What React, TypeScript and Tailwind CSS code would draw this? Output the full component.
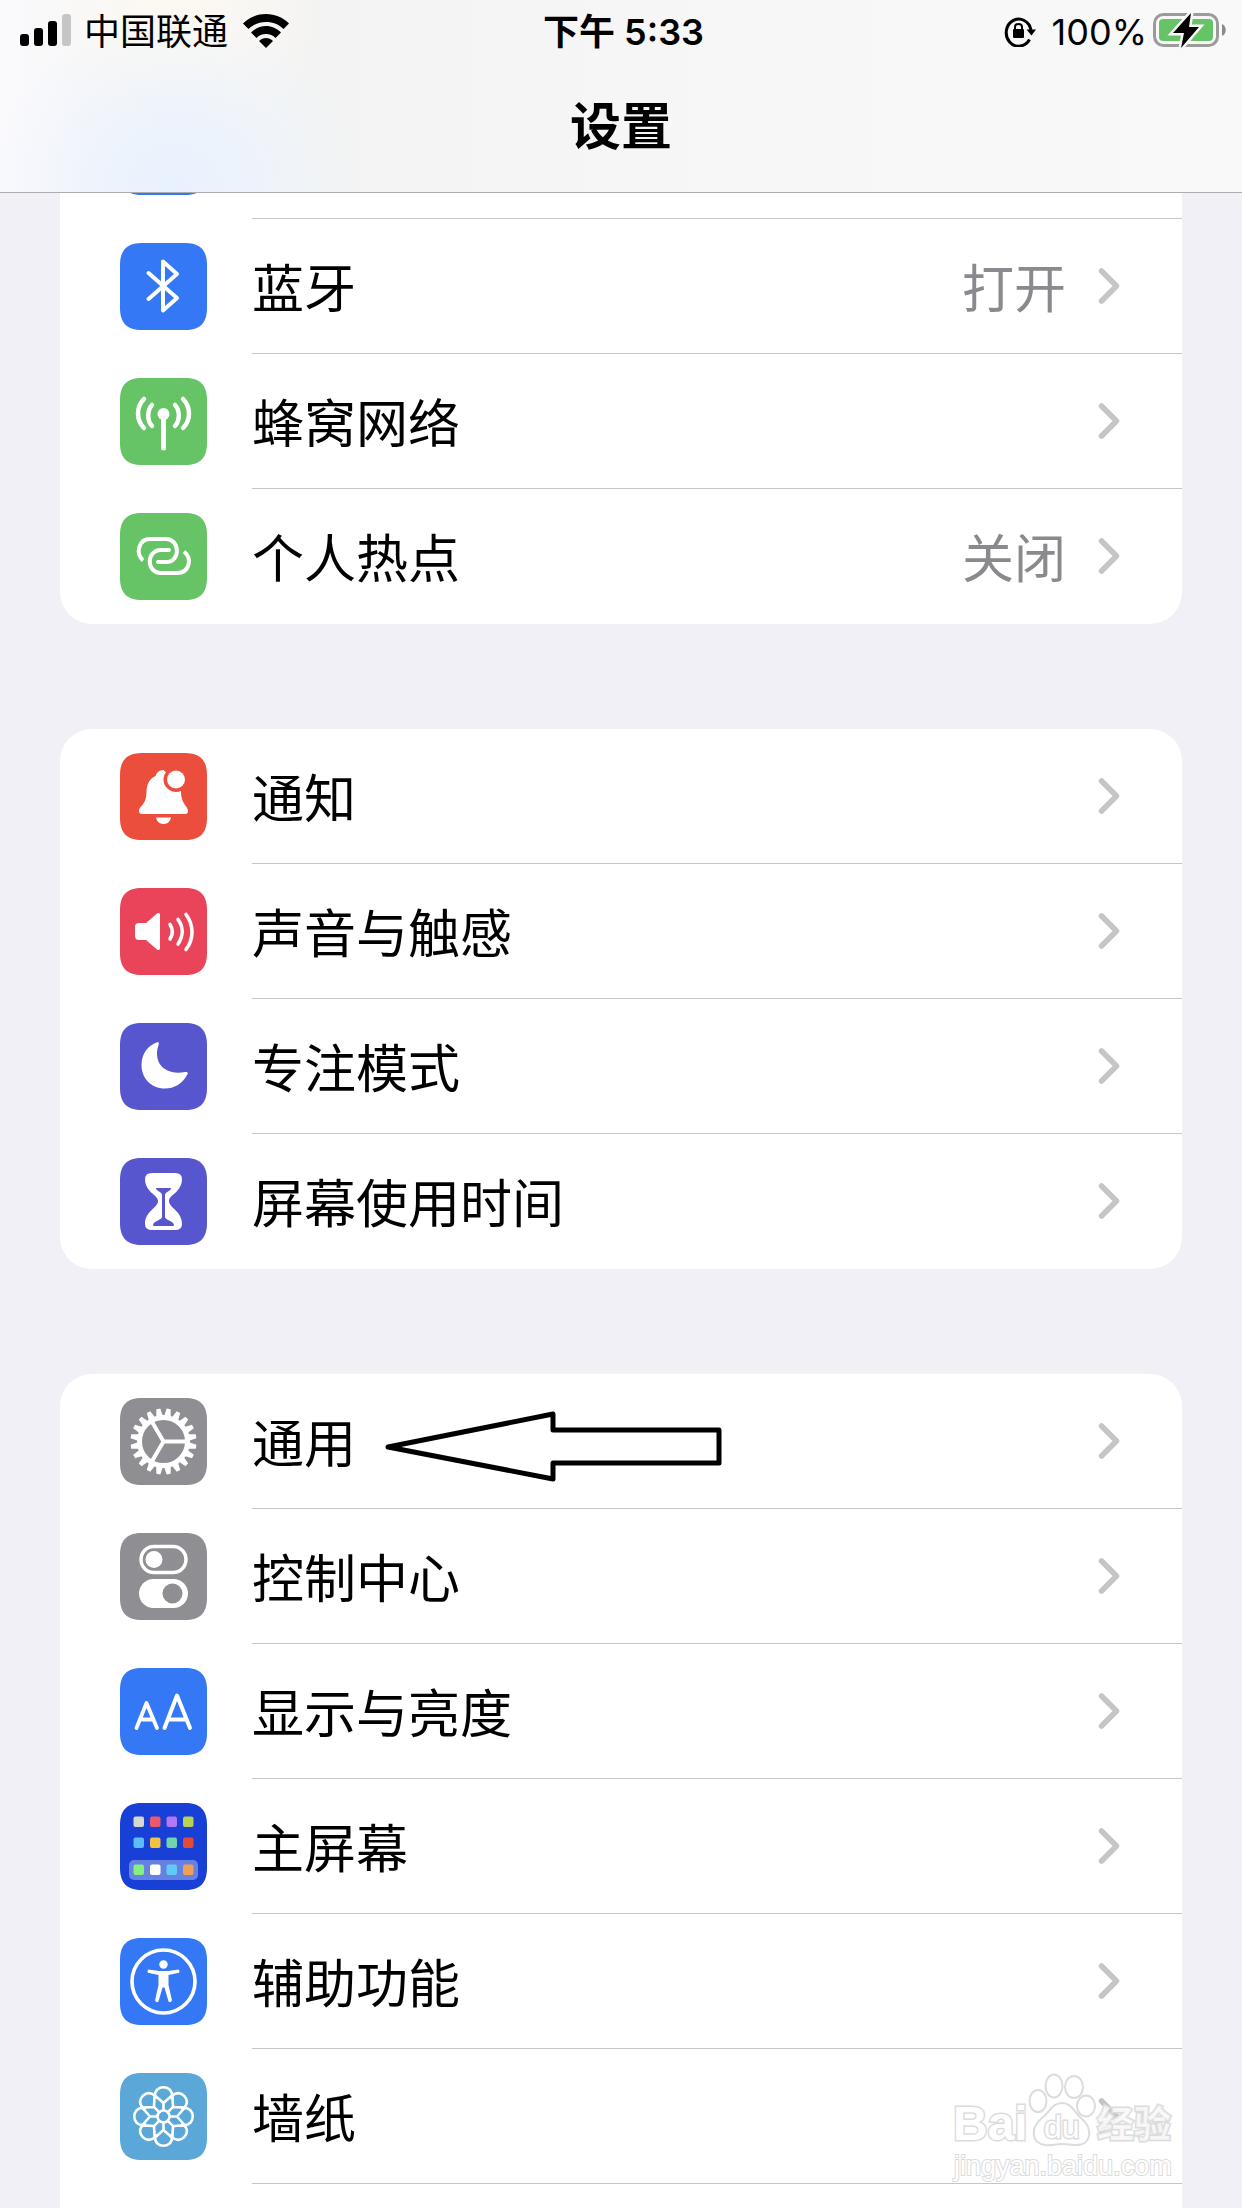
import { ReactNode } from "react";

const CHINESE = "font-['Inter','Noto_Sans_CJK_SC',sans-serif]";

function Tile({ color, children }: { color: string; children?: ReactNode }) {
  return (
    <svg viewBox="0 0 87 87" className={`size-[87px] shrink-0 ${color}`} aria-hidden="true">
      <path
        d="M22 0H65C80 0 87 7 87 22V65C87 80 80 87 65 87H22C7 87 0 80 0 65V22C0 7 7 0 22 0Z"
        fill="currentColor"
      />
      {children}
    </svg>
  );
}

function BluetoothIcon() {
  return (
    <Tile color="text-[#3478f6]">
      <path
        d="M28.500 30L57 55L43 67.500V18.500L57 31L28.500 56"
        fill="none"
        stroke="#fff"
        strokeWidth="4"
        strokeLinecap="round"
        strokeLinejoin="round"
      />
    </Tile>
  );
}

function CellularIcon() {
  return (
    <Tile color="text-[#67c466]">
      <circle cx="43.500" cy="36" r="6" fill="#fff" />
      <g fill="none" stroke="#fff" strokeWidth="4.500" strokeLinecap="round">
        <path d="M43.500 36V70" strokeWidth="5" />
        <path d="M32 27C27 32 27 43 32 48M55 27C60 32 60 43 55 48" />
        <path d="M24 21C16 29 16 42 24 50M63 21C71 29 71 42 63 50" />
      </g>
    </Tile>
  );
}

function HotspotIcon() {
  return (
    <Tile color="text-[#67c466]">
      <g fill="none" stroke="#fff" strokeWidth="4">
        <path d="M23 47.500C15 40 19 26 30 26H46C60 26 61 49 46 49H38" />
        <path d="M64 38.500C73 46 69 60 57 60H41C26 60 26 37 41 37H49" />
        <path d="M49 37H48M38 49H39" strokeLinecap="round" />
      </g>
    </Tile>
  );
}

function BellIcon() {
  return (
    <Tile color="text-[#eb4e3d]">
      <path
        d="M43.500 17C39 17 36.500 20 35.500 23C29 26 26.500 32 26.500 39C26.500 52 19 53 19 58Q19 61 22 61H65Q68 61 68 58C68 53 61 51 61 39V33Z"
        fill="#fff"
      />
      <circle cx="56" cy="26.500" r="12.500" fill="currentColor" />
      <circle cx="56" cy="26.500" r="9" fill="#fff" />
      <path d="M36 64.500H51C50 69 47 71 43.500 71S37 69 36 64.500Z" fill="#fff" />
    </Tile>
  );
}

function SpeakerIcon() {
  return (
    <Tile color="text-[#ea445a]">
      <path
        d="M19 35H26L37 25.500Q40 24 40 27V60Q40 63 37 61.500L26 52H19Q15 52 15 48V39Q15 35 19 35Z"
        fill="#fff"
      />
      <g fill="none" stroke="#fff" strokeWidth="3.600" strokeLinecap="round">
        <path d="M50 36.500C53 41 53 46 50 51" />
        <path d="M58 31.500C63.500 39 63.500 48 58 56" />
        <path d="M66 26.500C74 37 74 51 66 61.500" />
      </g>
    </Tile>
  );
}

function MoonIcon() {
  return (
    <Tile color="text-[#5756ce]">
      <path
        d="M36.500 19.500C39 19 39.500 20 38.500 22C33 38 43 53 65 49C68 48.500 68.500 50 67 52C62 61 54 65.500 45 65.500C31 65.500 21.500 55 21.500 42C21.500 31 28 22.500 36.500 19.500Z"
        fill="#fff"
      />
    </Tile>
  );
}

function HourglassIcon() {
  return (
    <Tile color="text-[#5756ce]">
      <path
        d="M32 15H55Q62 15 62 21C62 34 49 37 49 43C49 50 62 53 62 66Q62 72 55 72H32Q25 72 25 66C25 53 38 50 38 43C38 37 25 34 25 21Q25 15 32 15Z"
        fill="#fff"
      />
      <path
        d="M36 30H51C51 33 45 34 45 37V59C45 62 54 63 54 67Q54 68 53 68H34Q33 68 33 67C33 63 42 62 42 59V37C42 34 36 33 36 30Z"
        fill="currentColor"
      />
    </Tile>
  );
}

function GearIcon() {
  return (
    <Tile color="text-[#8e8e93]">
      {Array.from({ length: 20 }, (_, i) => (
        <path
          key={i}
          d="M40 19L41.500 10.500H45.500L47 19Z"
          fill="#fff"
          transform={`rotate(${i * 18 + 9} 43.500 43.500)`}
        />
      ))}
      <circle cx="43.500" cy="43.500" r="24" fill="none" stroke="#fff" strokeWidth="5" />
      <path d="M43.500 43.500H66M43.500 43.500L31.500 23M43.500 43.500L31.500 64" stroke="#fff" strokeWidth="4" />
    </Tile>
  );
}

function TogglesIcon() {
  return (
    <Tile color="text-[#8e8e93]">
      <rect x="21" y="13.500" width="45" height="26" rx="13" fill="none" stroke="#fff" strokeWidth="3.500" />
      <circle cx="34" cy="26.500" r="8.500" fill="#fff" />
      <rect x="19" y="46" width="49" height="29" rx="14.500" fill="#fff" />
      <circle cx="52.500" cy="60.500" r="10" fill="currentColor" />
    </Tile>
  );
}

function TextSizeIcon() {
  return (
    <Tile color="text-[#3478f6]">
      <g fill="none" stroke="#fff" strokeWidth="4" strokeLinecap="round" strokeLinejoin="round">
        <path d="M16.500 60L26.500 35L37 60M20 51.500H33.500" strokeWidth="3.800" />
        <path d="M44.500 60L57 27.500L70 60M49 51.500H65" />
      </g>
    </Tile>
  );
}

const apps = [
  ["#d7d7d0", "#eb5a6a", "#b277f5", "#b9d255"],
  ["#5abdf8", "#f5c142", "#70d5a8", "#e44a35"],
  ["#86f07f", "#ffffff", "#60cbfa", "#f0a055"],
];

function HomeScreenIcon() {
  return (
    <Tile color="text-[#183fd6]">
      <rect x="9" y="57" width="69" height="20" rx="5" fill="#6582e2" />
      {apps.map((row, y) =>
        row.map((fill, x) => (
          <rect
            key={`${x}-${y}`}
            x={13.5 + x * 16.5}
            y={[13.5, 34.5, 61.5][y]}
            width="10.500"
            height="10.500"
            rx="2"
            fill={fill}
          />
        ))
      )}
    </Tile>
  );
}

function AccessibilityIcon() {
  return (
    <Tile color="text-[#3478f6]">
      <circle cx="43.500" cy="43.500" r="31.500" fill="none" stroke="#fff" strokeWidth="3.600" />
      <circle cx="43.500" cy="26.500" r="4.200" fill="#fff" />
      <path
        d="M28.500 31.500L39 33H48L58.500 31.500Q60.500 33 59 34.800L48.500 37V47L52 62.500Q50.500 65.500 48.500 63.500L44.500 49.500H42.500L38.500 63.500Q36.500 65.500 35 62.500L38.500 47V37L28 34.800Q26.500 33 28.500 31.500Z"
        fill="#fff"
      />
    </Tile>
  );
}

function WallpaperIcon() {
  return (
    <Tile color="text-[#5aa7d8]">
      {[0, 45, 90, 135, 180, 225, 270, 315].map((angle) => (
        <path
          key={angle}
          d="M43.500 38V30L35 22.500C35 11.500 52 11.500 52 22.500L43.500 30M35 22.500V26M52 22.500V26"
          fill="none"
          stroke="#fff"
          strokeWidth="2.600"
          strokeLinejoin="round"
          transform={`rotate(${angle} 43.500 43.500)`}
        />
      ))}
      <circle cx="43.500" cy="43.500" r="6" fill="none" stroke="#fff" strokeWidth="2.600" />
    </Tile>
  );
}

function Chevron() {
  return (
    <svg viewBox="0 0 22 36" className="h-9 w-[22px] shrink-0" aria-hidden="true">
      <path
        d="M3.500 3L18.500 18L3.500 33"
        fill="none"
        stroke="#c5c5c7"
        strokeWidth="5.500"
        strokeLinecap="round"
        strokeLinejoin="round"
      />
    </svg>
  );
}

function PointerArrow() {
  return (
    <svg viewBox="0 0 340 84" className="ml-7 h-[84px] w-[340px] shrink-0" aria-hidden="true">
      <path
        d="M4 48L169 15V31H335V64H169V80Z"
        fill="none"
        stroke="#000"
        strokeWidth="5"
        strokeLinejoin="round"
      />
    </svg>
  );
}

type RowProps = { icon: ReactNode; label: string; value?: string; extra?: ReactNode; last?: boolean };

function Row({ icon, label, value, extra, last }: RowProps) {
  return (
    <li>
      <a href="#" className="flex h-[135px] items-center gap-[45px] pl-[60px]">
        {icon}
        <div
          className={`flex h-full flex-1 items-center border-b pr-[62px] ${
            last ? "border-transparent" : "border-[#c6c6c8]"
          }`}
        >
          <span className="pt-2 text-[52px] leading-[60px] whitespace-nowrap">{label}</span>
          {extra}
          <span className="mr-8 ml-auto pt-2 text-[52px] leading-[60px] text-[#8a8a8e]">{value}</span>
          <Chevron />
        </div>
      </a>
    </li>
  );
}

function Watermark() {
  return (
    <svg
      viewBox="0 0 228 112"
      className="absolute right-[64px] bottom-[25px] h-[112px] w-[228px]"
      fill="#fff"
      stroke="#dcdcdc"
      strokeWidth="2"
      aria-hidden="true"
    >
      <g fontFamily="Liberation Sans, Arial, sans-serif" fontWeight="700" paintOrder="stroke" strokeWidth="3">
        <text x="3" y="69" fontSize="48">
          Bai
        </text>
        <text x="147" y="67" fontSize="37" fontFamily="Noto Sans CJK SC, sans-serif" fillOpacity="0.7">
          经验
        </text>
      </g>
      <ellipse cx="88" cy="30" rx="8.500" ry="11" />
      <ellipse cx="104" cy="15" rx="8.500" ry="11.500" />
      <ellipse cx="124" cy="16" rx="9" ry="11" />
      <ellipse cx="136" cy="35" rx="9" ry="10.500" />
      <path d="M112 32C122 32 124 41 131 47C144 58 141 74 127 74C120 74 118 73 112 73C104 73 102 75 95 74C81 72 80 57 92 47C100 41 102 32 112 32Z" />
      <text x="94" y="67" fontSize="32" fontFamily="Liberation Sans, Arial, sans-serif" strokeWidth="3" paintOrder="stroke">
        du
      </text>
      <text x="4" y="104" fontSize="27" fontFamily="Liberation Sans, Arial, sans-serif" strokeWidth="2" paintOrder="stroke">
        jingyan.baidu.com
      </text>
    </svg>
  );
}

function StatusBar() {
  return (
    <div className="grid h-[62px] grid-cols-[1fr_auto_1fr] items-center pr-[15px] pl-5 text-[36px] leading-[44px]">
      <div className="flex items-center">
        <svg viewBox="0 0 52 34" className="h-[34px] w-[52px]" aria-hidden="true">
          <rect x="0" y="20" width="9" height="12" rx="3" />
          <rect x="14" y="14" width="9" height="18" rx="3" />
          <rect x="28" y="7" width="9" height="25" rx="3" />
          <rect x="42" y="0" width="9" height="32" rx="3" fill="#c6c6c6" />
        </svg>
        <span className="ml-3 pt-0.5">中国联通</span>
        <svg viewBox="0 0 46 34" className="ml-[15px] h-[34px] w-[46px]" aria-hidden="true">
          <path d="M23 0C32 0 40 3.500 46 9.500L40.500 15C36 10.500 30 8 23 8S10 10.500 5.500 15L0 9.500C6 3.500 14 0 23 0Z" />
          <path d="M23 12C28.500 12 34 14.500 38 18.500L32.500 24C30 21.500 27 20 23 20S16 21.500 13.500 24L8 18.500C12 14.500 17.500 12 23 12Z" />
          <path d="M23 24C25.500 24 28 25 30 27L23 34L16 27C18 25 20.500 24 23 24Z" />
        </svg>
      </div>
      <time className="pt-0.5 font-semibold">下午 5:33</time>
      <div className="flex items-center justify-end">
        <svg viewBox="0 0 32 32" className="h-8 w-8" aria-hidden="true">
          <path d="M25.500 24.500A12.500 13.500 0 1 1 27 15" fill="none" stroke="#000" strokeWidth="3" />
          <path d="M22.500 14.500H32L27.500 20.500Z" />
          <rect x="9" y="14" width="11" height="9" rx="1" />
          <path d="M11 14V12C11 8 18 8 18 12V14" fill="none" stroke="#000" strokeWidth="2" />
        </svg>
        <span className="ml-4 pt-0.5">100%</span>
        <svg viewBox="0 0 74 42" className="ml-1.5 h-[42px] w-[74px]" aria-hidden="true">
          <rect x="1.500" y="4.500" width="63" height="31" rx="9" fill="none" stroke="#9b9b9b" strokeWidth="3" />
          <rect x="6" y="9" width="54" height="22" rx="4" fill="#67c466" />
          <path d="M69 14C74 16 74 24 69 26Z" fill="#8a8a8a" />
          <path d="M38 3L20 23H31L28 38L46 17H36Z" stroke="#f8f8f8" strokeWidth="5" paintOrder="stroke" />
        </svg>
      </div>
    </div>
  );
}

export default function SettingsPage() {
  return (
    <div className={`relative min-h-screen overflow-hidden bg-[#f1f0f6] text-black ${CHINESE}`}>
      <header className="border-b border-[#adadb0] bg-[#f7f7f7] bg-[radial-gradient(circle_at_14%_100%,#e8f1fe_0,#edf3fc_6%,transparent_17%),radial-gradient(circle_at_14%_0%,#fdf9f0_0,transparent_14%),linear-gradient(90deg,#fafafd,#f3f3f3_25%,#f7f7f7_60%,#f9f9f9)]">
        <StatusBar />
        <h1 className="flex h-[130px] items-center justify-center text-[51px] leading-[60px] font-bold">设置</h1>
      </header>

      <main className="flex flex-col gap-[105px] px-[60px]">
        <ul className="rounded-b-[32px] bg-white">
          <li className="flex h-[26px] gap-[45px] overflow-hidden pl-[60px]">
            {/* tail of the Wi-Fi row scrolled under the title bar */}
            <div className="flex h-[2px] w-[87px] items-end overflow-hidden">
              <Tile color="text-[#3478f6]" />
            </div>
            <div className="h-full flex-1 border-b border-[#c6c6c8]"></div>
          </li>
          <Row icon={<BluetoothIcon />} label="蓝牙" value="打开" />
          <Row icon={<CellularIcon />} label="蜂窝网络" />
          <Row icon={<HotspotIcon />} label="个人热点" value="关闭" last />
        </ul>

        <ul className="rounded-[32px] bg-white">
          <Row icon={<BellIcon />} label="通知" />
          <Row icon={<SpeakerIcon />} label="声音与触感" />
          <Row icon={<MoonIcon />} label="专注模式" />
          <Row icon={<HourglassIcon />} label="屏幕使用时间" last />
        </ul>

        <ul className="rounded-t-[32px] bg-white pb-6">
          <Row icon={<GearIcon />} label="通用" extra={<PointerArrow />} />
          <Row icon={<TogglesIcon />} label="控制中心" />
          <Row icon={<TextSizeIcon />} label="显示与亮度" />
          <Row icon={<HomeScreenIcon />} label="主屏幕" />
          <Row icon={<AccessibilityIcon />} label="辅助功能" />
          <Row icon={<WallpaperIcon />} label="墙纸" />
        </ul>
      </main>

      <Watermark />
    </div>
  );
}
